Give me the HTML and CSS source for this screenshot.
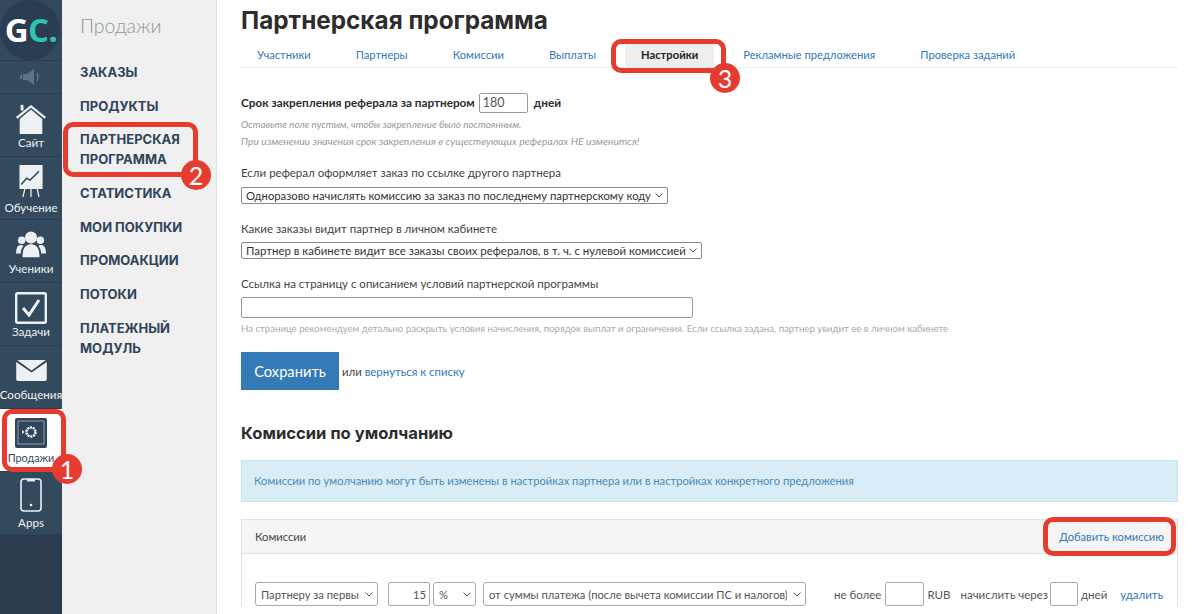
FILE: index.html
```html
<!DOCTYPE html>
<html lang="ru">
<head>
<meta charset="utf-8">
<title>Партнерская программа</title>
<link rel="stylesheet" href="styles.css">
</head>
<body>
<div class="app">
  <nav class="rail">
    <div class="logo-cell"><div class="logo">G<span class="logo-c">C.</span></div></div>
    <div class="rail-sound">
      <svg width="22" height="16" viewBox="0 0 22 16"><rect x="0" y="6" width="2" height="4" fill="#5d7486"/><rect x="3" y="5" width="4" height="6" fill="#5d7486"/><path d="M7 5l7-5v16l-7-5z" fill="#5d7486"/><path d="M17 4q2 4 0 8" fill="none" stroke="#5d7486" stroke-width="1.5"/></svg>
    </div>
    <a class="rail-item">
      <svg class="rail-icon" width="32" height="32" viewBox="0 0 34 34"><path d="M1 15L17 2l16 13-1.6 1.8L17 5 2.6 16.8z" fill="#eef1f3"/><rect x="6" y="2" width="3" height="6" fill="#eef1f3"/><path d="M5 17L17 7l12 10v16H5z" fill="#eef1f3"/></svg>
      <span>Сайт</span>
    </a>
    <a class="rail-item rail-item-low">
      <svg class="rail-icon" width="26" height="32" viewBox="0 0 28 36"><rect x="1" y="0" width="26" height="27" fill="#eef1f3"/><path d="M3 22l6-7 4 2 10-10" fill="none" stroke="#33495e" stroke-width="1.8"/><path d="M7 27l-2 9M14 27v9M21 27l2 9" stroke="#eef1f3" stroke-width="1.4"/></svg>
      <span>Обучение</span>
    </a>
    <a class="rail-item rail-item-gap">
      <svg class="rail-icon" width="32" height="28" viewBox="0 0 32 30"><circle cx="16" cy="7" r="6.5" fill="#eef1f3"/><circle cx="6" cy="10" r="4" fill="#eef1f3"/><circle cx="26" cy="10" r="4" fill="#eef1f3"/><path d="M7 28q-1-13 9-14 10 1 9 14z" fill="#eef1f3"/><path d="M0 24q0-9 5-9 2 0 3 1-3 3-3 8zM32 24q0-9-5-9-2 0-3 1 3 3 3 8z" fill="#eef1f3"/></svg>
      <span>Ученики</span>
    </a>
    <a class="rail-item">
      <svg class="rail-icon" width="32" height="32" viewBox="0 0 32 32"><rect x="1.2" y="1.2" width="29.6" height="29.6" rx="1.5" fill="none" stroke="#eef1f3" stroke-width="2.4"/><path d="M8 16l6 7 10-15" fill="none" stroke="#eef1f3" stroke-width="3"/></svg>
      <span>Задачи</span>
    </a>
    <a class="rail-item rail-item-mail">
      <svg class="rail-icon" width="31" height="21" viewBox="0 0 32 22"><path d="M1 0h30L16 11z" fill="#eef1f3"/><path d="M0 2l16 11L32 2v18a2 2 0 0 1-2 2H2a2 2 0 0 1-2-2z" fill="#eef1f3"/></svg>
      <span>Сообщения</span>
    </a>
    <a class="rail-item rail-item-active">
      <svg class="rail-icon" width="32" height="32" viewBox="0 0 32 32"><rect x="0" y="0" width="32" height="30" rx="2" fill="#2f4559"/><rect x="3" y="3" width="26" height="23" fill="none" stroke="#8fa0ae" stroke-width="1"/><circle cx="16" cy="14" r="4.5" fill="none" stroke="#fff" stroke-width="2.4" stroke-dasharray="2 .8"/><path d="M7 12l2.5 2L7 16z" fill="#fff"/></svg>
      <span>Продажи</span>
    </a>
    <a class="rail-item rail-item-low">
      <svg class="rail-icon" width="22" height="34" viewBox="0 0 22 34"><rect x="1" y="1" width="20" height="32" rx="3" fill="none" stroke="#eef1f3" stroke-width="1.6"/><rect x="7" y="1" width="8" height="2.4" fill="#eef1f3"/><circle cx="11" cy="27" r="1.3" fill="#eef1f3"/></svg>
      <span>Apps</span>
    </a>
  </nav>

  <aside class="panel">
    <div class="panel-title">Продажи</div>
    <ul class="panel-menu">
      <li>Заказы</li>
      <li>Продукты</li>
      <li>Партнерская программа</li>
      <li>Статистика</li>
      <li>Мои покупки</li>
      <li>Промоакции</li>
      <li>Потоки</li>
      <li>Платежный модуль</li>
    </ul>
  </aside>

  <main class="main">
    <h1 class="title">Партнерская программа</h1>
    <div class="tabs">
      <a class="tab">Участники</a>
      <a class="tab">Партнеры</a>
      <a class="tab">Комиссии</a>
      <a class="tab">Выплаты</a>
      <a class="tab tab-active">Настройки</a>
      <a class="tab">Рекламные предложения</a>
      <a class="tab">Проверка заданий</a>
    </div>

    <div class="term-row"><b>Срок закрепления реферала за партнером</b> <input class="input input-term" value="180"> <b>дней</b></div>
    <p class="hint-it hint-first">Оставьте поле пустым, чтобы закрепление было постоянным.</p>
    <p class="hint-it">При изменении значения срок закрепления в существующих рефералах НЕ изменится!</p>

    <label class="field-label label-a">Если реферал оформляет заказ по ссылке другого партнера</label>
    <select class="select select-a"><option>Одноразово начислять комиссию за заказ по последнему партнерскому коду</option></select>

    <label class="field-label label-b">Какие заказы видит партнер в личном кабинете</label>
    <select class="select select-b"><option>Партнер в кабинете видит все заказы своих рефералов, в т. ч. с нулевой комиссией</option></select>

    <label class="field-label label-c">Ссылка на страницу с описанием условий партнерской программы</label>
    <input class="input input-url">
    <p class="hint">На странице рекомендуем детально раскрыть условия начисления, порядок выплат и ограничения. Если ссылка задана, партнер увидит ее в личном кабинете</p>

    <div class="actions"><button class="btn">Сохранить</button><span class="or">или <a class="link">вернуться к списку</a></span></div>

    <h2 class="subtitle">Комиссии по умолчанию</h2>
    <div class="alert">Комиссии по умолчанию могут быть изменены в настройках партнера или в настройках конкретного предложения</div>

    <section class="card">
      <header class="card-head"><span>Комиссии</span><a class="link">Добавить комиссию</a></header>
      <div class="card-body">
        <select class="select sel-who"><option>Партнеру за первый заказ</option></select>
        <input class="input input-num" value="15">
        <select class="select sel-unit"><option>%</option></select>
        <select class="select sel-base"><option>от суммы платежа (после вычета комиссии ПС и налогов)</option></select>
        <span class="txt txt-max">не более</span>
        <input class="input input-max">
        <span class="txt">RUB</span>
        <span class="txt txt-after">начислить через</span>
        <input class="input input-days">
        <span class="txt">дней</span>
        <a class="link link-del">удалить</a>
      </div>
    </section>
  </main>
</div>

<div class="mark mark-1"></div><div class="badge badge-1">1</div>
<div class="mark mark-2"></div><div class="badge badge-2">2</div>
<div class="mark mark-3"></div><div class="badge badge-3">3</div>
<div class="mark mark-4"></div>
</body>
</html>
```
FILE: styles.css
```css
* { box-sizing: border-box; }
html, body { margin: 0; height: 614px; overflow: hidden; background: #fff; }
body { font-family: "Lato", "Open Sans", "Liberation Sans", sans-serif; color: #333; position: relative; }
.app { display: flex; height: 614px; }

/* rail */
.rail { width: 62px; flex: none; background: #2b3d4f; display: flex; flex-direction: column; align-self: stretch; }
.logo-cell { height: 61px; background: #334a5e; border-bottom: 1px solid #2b3d4f; }
.logo { width: 60px; height: 60px; border-radius: 50%; background: #2b3d50; color: #fff; font: 700 33px/60px "Open Sans", sans-serif; text-align: center; letter-spacing: -.6px; text-indent: 2px; }
.logo-c { color: #2ec4b0; }
.rail-sound { height: 33px; background: #334a5e; border-bottom: 1px solid #2b3d4f; display: flex; align-items: center; justify-content: center; }
.rail-item { height: 63px; background: #334a5e; border-bottom: 1px solid #2b3d4f; color: #eef1f3; font-size: 11.6px; line-height: 13px; display: flex; flex-direction: column; align-items: center; justify-content: flex-end; padding-bottom: 7px; gap: 1px; white-space: nowrap; }
.rail-item-low { padding-bottom: 5px; gap: 4px; }
.rail-item-gap { gap: 3px; }
.rail-item-mail { gap: 7px; }
.rail-item-active { background: #fff; color: #33495e; font-size: 10.8px; }
.rail-icon { flex: none; }

/* panel */
.panel { width: 155px; flex: none; background: #f0f0f0; border-right: 1px solid #ddd; padding: 16px 18px 0; }
.panel-title { font-size: 19.4px; line-height: 20px; color: #8a949d; font-weight: 300; margin-bottom: 19px; }
.panel-menu { list-style: none; margin: 0; padding: 0; }
.panel-menu li { font-family: "Inter", sans-serif; font-size: 13px; font-weight: 700; line-height: 20px; padding: 7px 0 6.7px; color: #2e4459; text-transform: uppercase; }

/* main */
.main { flex: none; width: 937px; margin-left: 24px; }
.title { font-family: "Inter", sans-serif; margin: 6px 0 0; font-size: 24.3px; line-height: 29px; font-weight: 700; color: #2d2d2d; }
.tabs { display: flex; height: 27px; margin-top: 6px; border-bottom: 1px solid #eee; }
.tab { font-size: 11.2px; line-height: 27px; color: #337ab7; padding: 0 16px; margin-right: 13px; }
.tab-active { background: #eee; color: #222; font-weight: 700; }

.term-row { margin-top: 24px; font-size: 11.75px; height: 21px; display: flex; align-items: center; gap: 3px; color: #2d2d2d; }
.term-row b { font-weight: 700; }
.input { border: 1px solid #999; border-radius: 2px; background: #fff; font: inherit; font-size: 12.5px; color: #555; padding: 0 3px; outline: none; }
.input-term { width: 49px; height: 20px; margin: 0 3px 0 1px; }
.hint-it { margin: 0; font-size: 10.3px; line-height: 17px; font-style: italic; color: #999; }
.hint-first { margin-top: 3px; font-size: 9.8px; }

.field-label { display: block; font-size: 11.5px; line-height: 14px; color: #444; }
.label-a { margin-top: 16px; }
.label-b { margin-top: 18px; }
.label-c { margin-top: 18px; }
.select { appearance: none; display: block; height: 17px; border: 1px solid #888; border-radius: 2px; padding: 0 12px 0 4px; font: inherit; font-size: 11.45px; line-height: 15px; color: #333; background: #fff url("data:image/svg+xml,%3Csvg xmlns='http://www.w3.org/2000/svg' width='8' height='5'%3E%3Cpath d='M.5.5L4 4 7.5.5' fill='none' stroke='%23555'/%3E%3C/svg%3E") no-repeat right 4px center; flex: none; }
.select-a { width: 427px; margin-top: 7px; font-size: 11.3px; }
.select-b { width: 461px; margin-top: 6px; }
.input-url { display: block; width: 452px; height: 21px; margin-top: 6px; }
.hint { margin: 4px 0 0; font-size: 9.6px; line-height: 14px; color: #aaa; white-space: nowrap; }

.actions { margin-top: 16px; display: flex; align-items: center; }
.btn { width: 98px; height: 38px; background: #337ab7; border: 0; color: #fff; font: inherit; font-size: 14.7px; padding: 0; }
.or { margin-left: 3px; font-size: 11.4px; color: #444; }
.link { color: #337ab7; }

.subtitle { font-family: "Inter", sans-serif; margin: 31px 0 0; font-size: 16.6px; line-height: 24px; font-weight: 700; color: #2d2d2d; }
.alert { margin-top: 15px; height: 42px; background: #d9edf7; border: 1px solid #c5e6f1; padding: 0 12px; font-size: 11.2px; line-height: 40px; color: #4a8bb5; }

.card { margin-top: 17px; border: 1px solid #e2e2e2; border-bottom: 0; }
.card-head { height: 34px; background: #f5f5f5; border-bottom: 1px solid #e2e2e2; display: flex; justify-content: space-between; align-items: center; padding: 0 13px 1px; font-size: 11.2px; color: #444; }
.card-body { display: flex; align-items: center; padding: 28px 13px 0; font-size: 11.5px; color: #555; white-space: nowrap; }
.card-body .select { height: 24px; font-size: 11.2px; color: #555; border-color: #aaa; border-radius: 3px; padding: 0 18px 0 5px; }
.sel-who { width: 123px; }
.sel-unit { width: 43px; margin-left: 3px; }
.sel-base { width: 323px; margin-left: 7px; }
.input-num { width: 42px; height: 24px; margin-left: 10px; text-align: right; border-color: #aaa; flex: none; font-size: 11.2px; }
.input-max { width: 39px; height: 24px; margin: 0 3px 0 4px; border-color: #aaa; flex: none; }
.input-days { width: 28px; height: 24px; margin: 0 3px 0 2px; border-color: #aaa; flex: none; }
.txt-max { margin-left: 28px; }
.txt-after { margin-left: 10px; }
.link-del { margin-left: 13px; }

/* annotations lying over the page */
.mark { position: absolute; border: 5px solid #e63c2f; border-radius: 10px; }
.mark-1 { left: 2px; top: 409px; width: 64px; height: 63px; }
.mark-2 { left: 63px; top: 122px; width: 135px; height: 55px; }
.mark-3 { left: 611px; top: 39px; width: 115px; height: 34px; }
.mark-4 { left: 1043px; top: 517px; width: 133px; height: 39px; }
.badge { position: absolute; width: 30px; height: 30px; border-radius: 50%; background: #e63c2f; color: #fff; font-size: 25px; line-height: 30px; text-align: center; font-weight: 400; }
.badge-1 { left: 52px; top: 454px; }
.badge-2 { left: 181px; top: 160px; }
.badge-3 { left: 710px; top: 63px; }
```
